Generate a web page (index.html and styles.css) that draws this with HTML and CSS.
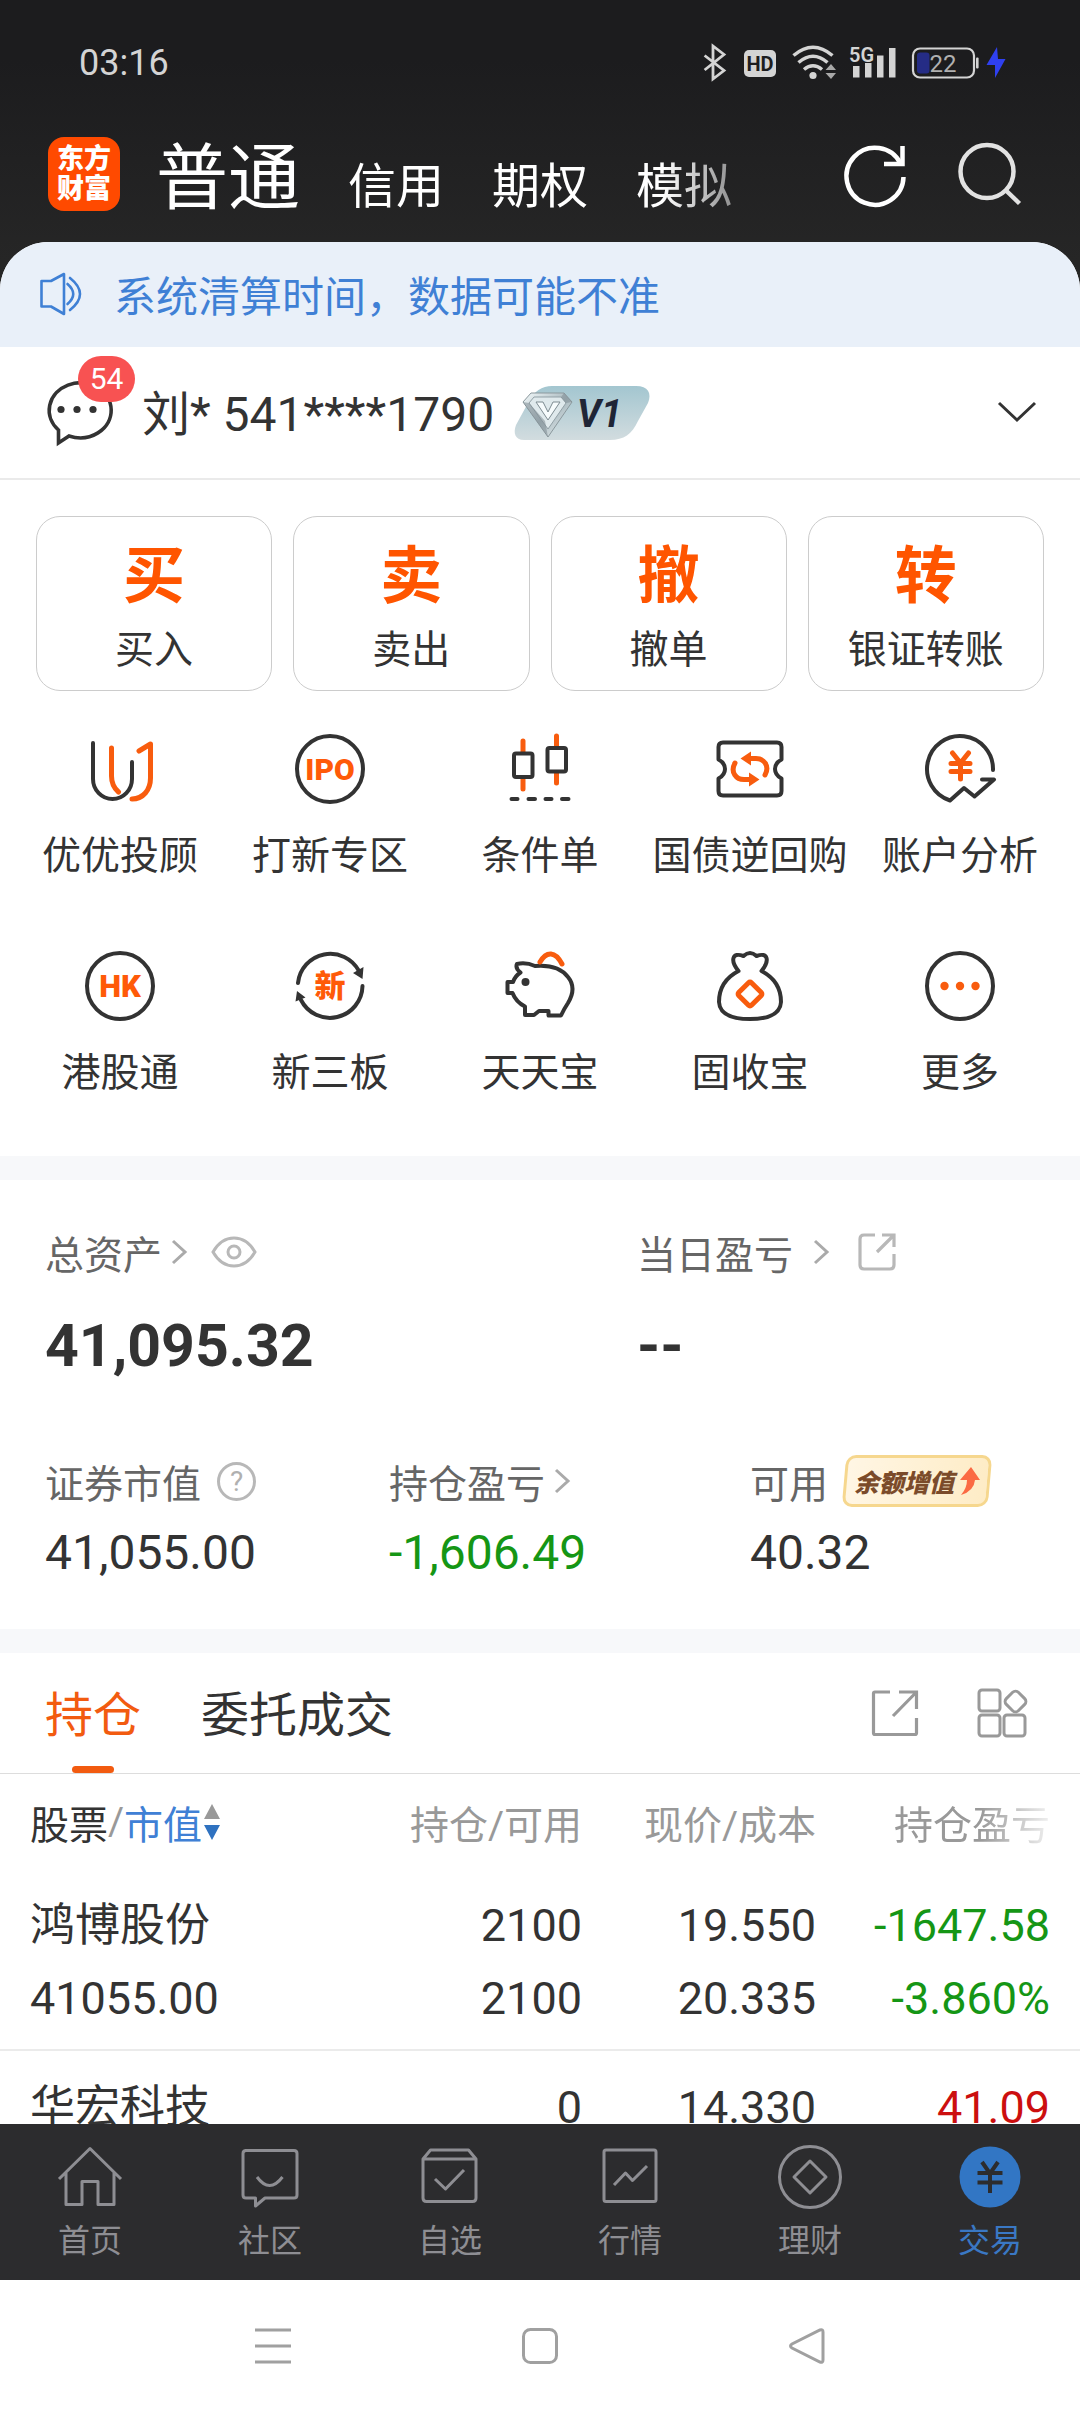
FILE: index.html
```html
<!DOCTYPE html>
<html lang="zh-CN">
<head>
<meta charset="utf-8">
<meta name="viewport" content="width=device-width, initial-scale=1">
<title>交易</title>
<link rel="stylesheet" href="styles.css">
</head>
<body>
<header class="top">
  <div class="status">
    <time>03:16</time>
    <svg class="status-icons" viewBox="0 0 308 40" width="308" height="40" role="img" aria-label="5G 22%">
      <path d="M4.600 12.500L24 27.500L13 36V3L24 11.500L4.600 27" fill="none" stroke="#d4d4d4" stroke-width="2.800"/>
      <rect x="44" y="7" width="32" height="27" rx="5" fill="#d4d4d4"/>
      <text x="60" y="28" text-anchor="middle" font-size="20" font-weight="700" fill="#1d1d1f">HD</text>
      <g fill="none" stroke="#d4d4d4" stroke-width="3.500">
        <path d="M93.500 12.500Q113 -4 132.500 12.500"/>
        <path d="M98.500 19.500Q113 7 127.500 19.500"/>
        <path d="M104 26.500Q113 19 122 26.500"/>
      </g>
      <circle cx="113" cy="32.500" r="3.600" fill="#d4d4d4"/>
      <path d="M125.500 27L131 21L136 27ZM125.500 30L131 36L136 30Z" fill="#a8a8a8"/>
      <text x="149" y="19" font-size="20" font-weight="600" fill="#d4d4d4">5G</text>
      <path d="M153 23h6.500v11.500h-6.500zM165 20h6.500v14.500h-6.500zM177 12.500h6.500v22h-6.500zM189 5h6.500v29.500h-6.500z" fill="#d4d4d4"/>
      <rect x="213" y="5.500" width="61" height="29" rx="7" fill="none" stroke="#d4d4d4" stroke-width="2.200"/>
      <rect x="217" y="9.500" width="12.500" height="21" rx="3" fill="#252c85"/>
      <rect x="276" y="14.500" width="2.600" height="11" rx="1" fill="#d4d4d4"/>
      <text x="229.500" y="28.500" font-size="24" fill="#b0b0b0">22</text>
      <path d="M297 4L286.500 22H295V35L305.500 16H298Z" fill="#2f40f0"/>
    </svg>
  </div>
  <div class="bar">
    <div class="logo">东方<br>财富</div>
    <nav class="modes">
      <a class="mode mode-on" href="#">普通</a>
      <a class="mode" href="#">信用</a>
      <a class="mode" href="#">期权</a>
      <a class="mode" href="#">模拟</a>
    </nav>
    <div class="tools">
      <button type="button" aria-label="刷新"><svg viewBox="0 0 64 64" width="64" height="64" fill="none" stroke="#fff" stroke-width="4.500"><path d="M60.500 35A28.500 28.500 0 1 1 57.500 21.500"/><path d="M59.500 4V22H41"/></svg></button>
      <button type="button" aria-label="搜索"><svg viewBox="0 0 64 64" width="64" height="64" fill="none" stroke="#e2e2e2" stroke-width="4.500"><circle cx="30" cy="29.500" r="26.500"/><path d="M48.500 48L62.500 61.500"/></svg></button>
    </div>
  </div>
</header>

<main class="sheet">
  <div class="notice">
    <svg viewBox="0 0 44 44" width="44" height="44" fill="none" stroke="#3f80d5" stroke-width="2.600" stroke-linecap="round" stroke-linejoin="round"><path d="M2.500 9H12L25 2V42L12 34.500H2.500Z"/><path d="M28.500 12Q40 22 28.500 32"/><path d="M31 6Q51 22 31 38"/></svg>
    <span>系统清算时间，数据可能不准</span>
  </div>

  <section class="user">
    <a class="chat" href="#" aria-label="消息">
      <svg viewBox="0 0 68 68" width="68" height="68"><path d="M15.500 51A31 27.500 0 1 1 26 57L15.500 64Z" fill="none" stroke="#333" stroke-width="3.600"/><g fill="#333"><circle cx="18" cy="30.500" r="3.600"/><circle cx="34" cy="30.500" r="3.600"/><circle cx="50" cy="30.500" r="3.600"/></g></svg>
      <span class="count">54</span>
    </a>
    <span class="account">刘* 541****1790</span>
    <svg class="level" viewBox="0 0 137 56" width="137" height="56" role="img" aria-label="V1">
      <defs>
        <linearGradient id="plate" x1="0" y1="0" x2="0" y2="1"><stop offset="0" stop-color="#a3c6d0"/><stop offset="1" stop-color="#d2dcdf"/></linearGradient>
        <linearGradient id="gem" x1="0" y1="0" x2="1" y2="1"><stop offset="0" stop-color="#f4fafb"/><stop offset=".5" stop-color="#a9b9bf"/><stop offset="1" stop-color="#eef4f5"/></linearGradient>
      </defs>
      <path d="M38 1H122C134 1 138 8 134 18L124 36C118 49 110 55 96 55H10C1 55 -1 48 2 40L14 18C20 6 28 1 38 1Z" fill="url(#plate)"/>
      <path d="M17 8H50L58 17L34 52L9 17Z" fill="url(#gem)" stroke="#8b989d"/>
      <path d="M20 12H47L52 18L34 44L15 18Z" fill="#dfe9ec" stroke="#93a1a7"/>
      <path d="M22 17L34 35L46 17H39L34 27L29 17Z" fill="#f6fbfc" stroke="#7d8b91"/>
      <path d="M9 17L34 52L31 36L15 18ZM50 8L58 17L52 18L47 12Z" fill="#7f8d93" opacity=".55"/>
      <text x="63" y="42" font-size="38" font-weight="700" font-style="italic" fill="#1f2536">V1</text>
    </svg>
    <button class="expand" type="button" aria-label="展开"><svg viewBox="0 0 40 24" width="40" height="24" fill="none" stroke="#333" stroke-width="3"><path d="M2 2L20 19L38 2"/></svg></button>
  </section>

  <section class="cards">
    <button class="card" type="button"><b>买</b><span>买入</span></button>
    <button class="card" type="button"><b>卖</b><span>卖出</span></button>
    <button class="card" type="button"><b>撤</b><span>撤单</span></button>
    <button class="card" type="button"><b>转</b><span>银证转账</span></button>
  </section>

  <nav class="grid">
    <a href="#"><svg class="ico" viewBox="0 0 80 80"><path class="d" d="M13 14V50A19.500 20 0 0 0 52 50V33"/><path class="o" d="M31.500 19V47Q31.500 57 38.500 63M52 70C63 70 70.500 61 70.500 49V15L59 22"/></svg><span>优优投顾</span></a>
    <a href="#"><svg class="ico" viewBox="0 0 80 80"><circle class="d" cx="40" cy="40" r="33"/><text class="t" x="40" y="51" font-size="30">IPO</text></svg><span>打新专区</span></a>
    <a href="#"><svg class="ico" viewBox="0 0 80 80"><path class="o" d="M23 12V23M23 49V60M56.500 7V17M56.500 44V54"/><rect class="d" x="14" y="24.500" width="18.500" height="23.500" rx="2"/><rect class="d" x="47.500" y="19" width="18.500" height="23.500" rx="2"/><path class="d" d="M11.500 70H17.500M28.500 70H35M45.500 70H51.500M62 70H68.500"/></svg><span>条件单</span></a>
    <a href="#"><svg class="ico" viewBox="0 0 80 80"><path class="d" d="M13 13.500H67Q71.500 13.500 71.500 18V30.500Q65 34 65 40T71.500 49.500V62Q71.500 66.500 67 66.500H13Q8.500 66.500 8.500 62V49.500Q15 46 15 40T8.500 30.500V18Q8.500 13.500 13 13.500Z"/><path class="o" d="M55 46C60 37 54 29 45 29.500H38M25 34C20 43 26 51 35 50.500H42"/><path class="f" d="M30.500 29.500L41 22.500V36.500ZM49.500 50.500L39 43.500V57.500Z"/></svg><span>国债逆回购</span></a>
    <a href="#"><svg class="ico" viewBox="0 0 80 80"><path class="d" d="M73 41A33 33 0 1 0 30 71.500L44 59L54.500 67.500L74 50.500H62"/><path class="o" d="M32.500 24L40.500 34L48.500 24M40.500 34V50M31 34.500H50M31 42.500H50"/></svg><span>账户分析</span></a>
    <a href="#"><svg class="ico" viewBox="0 0 80 80"><circle class="d" cx="40" cy="40" r="33"/><text class="t" x="40" y="51" font-size="31">HK</text></svg><span>港股通</span></a>
    <a href="#"><svg class="ico" viewBox="0 0 80 80"><path class="d" d="M8 37A32.500 32.500 0 0 1 69 25M72.500 40A32.500 32.500 0 0 1 11 54"/><path class="k" d="M72.500 33L63 27L73.500 21ZM7 45L5.500 55.500L15.500 51.500Z"/><text class="t" x="40" y="51" font-size="31">新</text></svg><span>新三板</span></a>
    <a href="#"><svg class="ico" viewBox="0 0 80 80"><path class="d" d="M17 18Q15 22 20.500 26.500Q15 30 13 36H7.500V47H12.500Q16 56 25 60.500V69H34L39 65H48.500V69.500H61Q64 63 68 57Q77 42 68 31Q58 18 35 20Q26 16 17 18Z"/><circle class="k" cx="25.500" cy="36" r="4"/><path class="o" d="M40 16Q45 7.500 51 8T62 18"/></svg><span>天天宝</span></a>
    <a href="#"><svg class="ico" viewBox="0 0 80 80"><path class="d" d="M28.500 25Q22 17 23.500 12T33.500 10Q40 4 46.500 10Q55 7 56.500 12T51.500 25C63 31 71 41 71 56Q70 73 40 73T9 56C9 41 17 31 28.500 25Z"/><rect class="o" x="31" y="39" width="18" height="18" rx="2" transform="rotate(45 40 48)"/></svg><span>固收宝</span></a>
    <a href="#"><svg class="ico" viewBox="0 0 80 80"><circle class="d" cx="40" cy="40" r="33"/><g class="f"><circle cx="24.500" cy="40" r="4.200"/><circle cx="40" cy="40" r="4.200"/><circle cx="55.500" cy="40" r="4.200"/></g></svg><span>更多</span></a>
  </nav>

  <section class="assets">
    <div class="totals">
      <div>
        <div class="label"><a href="#">总资产<svg class="arrow" viewBox="0 0 16 26" width="16" height="26"><path d="M2 2L14 13L2 24"/></svg></a>
          <button type="button" aria-label="隐藏金额"><svg viewBox="0 0 46 32" width="46" height="32" fill="none" stroke="#b8b8b8" stroke-width="3"><path d="M2 16Q10 2 23 2T44 16Q36 30 23 30T2 16Z"/><circle cx="23" cy="16" r="6"/></svg></button></div>
        <div class="total">41,095.32</div>
      </div>
      <div>
        <div class="label"><a class="wide" href="#">当日盈亏<svg class="arrow" viewBox="0 0 16 26" width="16" height="26"><path d="M2 2L14 13L2 24"/></svg></a>
          <button class="share" type="button" aria-label="分享"><svg viewBox="0 0 40 40" width="40" height="40" fill="none" stroke="#b8b8b8" stroke-width="3.200"><path d="M18 3H7Q3 3 3 7V33Q3 37 7 37H33Q37 37 37 33V22M25 3H37V15M37 3L20 20"/></svg></button></div>
        <div class="total">--</div>
      </div>
    </div>
    <div class="parts">
      <div>
        <div class="label">证券市值<button class="help" type="button" aria-label="说明">?</button></div>
        <div class="part">41,055.00</div>
      </div>
      <div>
        <div class="label"><a href="#">持仓盈亏<svg class="arrow" viewBox="0 0 16 26" width="16" height="26"><path d="M2 2L14 13L2 24"/></svg></a></div>
        <div class="part down">-1,606.49</div>
      </div>
      <div>
        <div class="label">可用<button class="promo" type="button">余额增值<svg viewBox="0 0 22 30" width="22" height="30"><path d="M13 1L22 14H17Q16 25 3 29Q9 22 9 14H2Z" fill="#fb6a43"/></svg></button></div>
        <div class="part">40.32</div>
      </div>
    </div>
  </section>

  <section class="holdings">
    <div class="tabs">
      <button class="tab tab-on" type="button">持仓</button>
      <button class="tab" type="button">委托成交</button>
      <div class="tab-tools">
        <button type="button" aria-label="分享"><svg viewBox="0 0 48 48" width="48" height="48" fill="none" stroke="#999" stroke-width="3.200"><path d="M19 3H4Q2.500 3 2.500 4.500V44Q2.500 45.500 4 45.500H44Q45.500 45.500 45.500 44V29M28 3H45.500V20M45.500 3L22 27"/></svg></button>
        <button type="button" aria-label="布局"><svg viewBox="0 0 50 50" width="50" height="50" fill="none" stroke="#999" stroke-width="3"><rect x="2" y="2" width="21" height="21" rx="3"/><rect x="2" y="27" width="21" height="21" rx="3"/><rect x="27" y="27" width="21" height="21" rx="3"/><rect x="30" y="5" width="17" height="17" rx="4" transform="rotate(45 38.500 13.500)"/></svg></button>
      </div>
    </div>
    <table class="table">
      <colgroup><col><col class="c-qty"><col class="c-price"><col class="c-gain"></colgroup>
      <thead>
        <tr>
          <th scope="col"><span class="sort"><span class="dark">股票</span>/<span class="blue">市值</span><svg viewBox="0 0 16 36" width="16" height="36"><path d="M8 0L16 15H0Z" fill="#999"/><path d="M8 36L16 21H0Z" fill="#2f72c0"/></svg></span></th>
          <th scope="col">持仓/可用</th>
          <th scope="col">现价/成本</th>
          <th scope="col"><span class="fade">持仓盈亏</span></th>
        </tr>
      </thead>
      <tbody>
        <tr><td>鸿博股份<br>41055.00</td><td>2100<br>2100</td><td>19.550<br>20.335</td><td class="down">-1647.58<br>-3.860%</td></tr>
        <tr><td>华宏科技</td><td>0</td><td>14.330</td><td class="up">41.09</td></tr>
      </tbody>
    </table>
  </section>
</main>

<nav class="tabbar">
  <a href="#"><svg viewBox="0 0 64 64"><path d="M1 34L32 3.500L63 34M8 28V59.500H24V36.500H40V59.500H56V28"/></svg>首页</a>
  <a href="#"><svg viewBox="0 0 64 64"><path d="M7 5.500H56Q59 5.500 59 8.500V50Q59 53 56 53H27L17.500 61V53H8Q5 53 5 50V8.500Q5 5.500 8 5.500M19 32Q31.500 49 44.500 32"/></svg>社区</a>
  <a href="#"><svg viewBox="0 0 64 64"><path d="M5 14L12.500 5H50.500L58 14V53Q58 56.500 54.500 56.500H8.500Q5 56.500 5 53ZM5 14H58M17 34L27.500 44L46 25"/></svg>自选</a>
  <a href="#"><svg viewBox="0 0 64 64"><rect x="6" y="5" width="52" height="51.500" rx="2"/><path d="M16 40L27.500 28L34.500 35.500L49 21"/></svg>行情</a>
  <a href="#"><svg viewBox="0 0 64 64"><circle cx="32" cy="32" r="30.500"/><path d="M32 16L48 32L32 48L16 32Z"/></svg>理财</a>
  <a class="on" href="#"><svg viewBox="0 0 64 64"><circle class="coin" cx="32" cy="32" r="30.500"/><path class="yen" d="M24 17L32 28.500L40 17M32 28V48M19.500 28H44.500M19.500 37.500H44.500"/></svg>交易</a>
</nav>

<nav class="sysnav">
  <button type="button" aria-label="最近任务"><svg viewBox="0 0 36 36"><path d="M0 2H36M0 18H36M0 34H36"/></svg></button>
  <button type="button" aria-label="主屏幕"><svg viewBox="0 0 36 36"><rect x="1.500" y="1.500" width="33" height="33" rx="7"/></svg></button>
  <button type="button" aria-label="返回"><svg viewBox="0 0 36 36"><path d="M31 2Q34 1 34 4V32Q34 35 31 34L3 20Q0 18 3 16Z"/></svg></button>
</nav>
</body>
</html>
```
FILE: styles.css
```css
* { box-sizing: border-box; }

body {
  margin: 0;
  height: 100vh;
  display: flex;
  flex-direction: column;
  overflow: hidden;
  font-family: Roboto, "Noto Sans CJK SC", sans-serif;
  color: #333;
  background: linear-gradient(#1c1c1e 60px, #262626 260px);
}

a { color: inherit; text-decoration: none; }

button {
  margin: 0;
  padding: 0;
  border: 0;
  background: none;
  font: inherit;
  color: inherit;
}

svg { display: block; flex: none; overflow: visible; }

/* Status bar and account switcher */
.status {
  display: flex;
  align-items: center;
  justify-content: space-between;
  height: 106px;
  padding: 20px 72px 0 79px;
  font-size: 36px;
  color: #d4d4d4;
}

.bar {
  display: flex;
  align-items: center;
  height: 136px;
  padding: 0 59px 0 48px;
}

.logo {
  display: grid;
  place-content: center;
  width: 72px;
  height: 74px;
  border-radius: 16px;
  background: #ff4a00;
  color: #fff;
  font-size: 27px;
  font-weight: 900;
  line-height: 30px;
}

.modes {
  display: flex;
  align-items: baseline;
  gap: 48px;
  margin-left: 36px;
  padding-top: 18px;
  color: #fff;
  font-size: 48px;
  line-height: 72px;
  -webkit-mask: linear-gradient(90deg, #000 88%, rgba(0, 0, 0, .5));
  mask: linear-gradient(90deg, #000 88%, rgba(0, 0, 0, .5));
}

.mode-on { font-size: 72px; }

.tools {
  display: flex;
  gap: 50px;
  margin-left: auto;
}

/* Sheet */
.sheet {
  flex: 1;
  min-height: 0;
  overflow: hidden;
  border-radius: 48px 48px 0 0;
  background: #fff;
}

.notice {
  display: flex;
  align-items: center;
  gap: 31px;
  height: 105px;
  padding: 0 39px 2px;
  background: #e9f0f9;
  color: #3f80d5;
  font-size: 42px;
}

.user {
  display: flex;
  align-items: center;
  height: 133px;
  padding: 0 43px;
  border-bottom: 2px solid #eaeaea;
}

.chat { position: relative; }

.count {
  position: absolute;
  left: 35px;
  top: -23px;
  width: 57px;
  border-radius: 23px;
  background: #f85252;
  color: #fff;
  font-size: 30px;
  line-height: 46px;
  text-align: center;
}

.account {
  margin: 0 20px 0 31px;
  padding-bottom: 5px;
  font-size: 48px;
}

.expand { margin-left: auto; }

.cards {
  display: grid;
  grid-template-columns: repeat(4, 1fr);
  gap: 21px;
  padding: 36px;
}

.card {
  display: flex;
  flex-direction: column;
  align-items: center;
  gap: 13px;
  padding: 24px 0 16px;
  border: 1px solid #ccc;
  border-radius: 24px;
  font-size: 39px;
  line-height: 48px;
}

.card b {
  color: #ff5500;
  font-size: 62px;
  line-height: 72px;
}

.grid {
  display: grid;
  grid-template-columns: repeat(5, 1fr);
  row-gap: 66px;
  padding: 2px 15px 59px;
}

.grid a {
  display: flex;
  flex-direction: column;
  align-items: center;
  gap: 23px;
  font-size: 39px;
  line-height: 48px;
  white-space: nowrap;
}

.ico { width: 80px; height: 80px; }
.d { fill: none; stroke: #333; stroke-width: 4; stroke-linecap: round; stroke-linejoin: round; }
.o { fill: none; stroke: #f85c0e; stroke-width: 5; stroke-linecap: round; stroke-linejoin: round; }
.f { fill: #f85c0e; }
.k { fill: #333; }
.t { fill: #ff5a08; font-weight: 900; text-anchor: middle; }

/* Assets */
.assets {
  padding: 48px 0 46px 45px;
  border: solid #f7f8fa;
  border-width: 24px 0;
}

.totals, .parts { display: grid; }
.totals { grid-template-columns: 592fr 443fr; }
.parts { grid-template-columns: 344fr 361fr 330fr; margin-top: 73px; }

.label {
  display: flex;
  align-items: center;
  height: 48px;
  color: #666;
  font-size: 39px;
  white-space: nowrap;
}

.parts .label { height: 52px; }

.label a {
  display: flex;
  align-items: center;
  gap: 9px;
  margin-right: 24px;
}

.label .wide { gap: 20px; margin-right: 28px; }

.arrow { fill: none; stroke: #aaa; stroke-width: 3; }

.total {
  margin-top: 34px;
  font-size: 59px;
  font-weight: 700;
  line-height: 72px;
}

.part {
  margin-top: 16px;
  font-size: 48px;
  line-height: 60px;
}

.help {
  width: 39px;
  height: 39px;
  margin-left: 16px;
  border: 3px solid #b8b8b8;
  border-radius: 50%;
  color: #b0b0b0;
  font-size: 28px;
  line-height: 33px;
}

.promo {
  position: relative;
  z-index: 0;
  display: flex;
  align-items: center;
  gap: 4px;
  height: 52px;
  margin-left: 14px;
  padding: 0 12px;
  color: #7b4b2a;
  font-size: 25px;
  font-weight: 900;
  font-style: italic;
}

.promo::before {
  content: "";
  position: absolute;
  inset: 0 2px;
  z-index: -1;
  border: 3px solid #f6d78e;
  border-radius: 10px;
  background: linear-gradient(90deg, #fff6e4, #feecc6);
  transform: skewX(-5deg);
}

.down { color: #159615; }
.up { color: #cc0f0f; }

/* Holdings */
.tabs {
  display: flex;
  align-items: stretch;
  gap: 60px;
  height: 121px;
  padding: 0 53px 0 45px;
  border-bottom: 1px solid #ddd;
}

.tab {
  position: relative;
  padding-bottom: 4px;
  font-size: 48px;
}

.tab-on { color: #f25b10; }

.tab-on::after {
  content: "";
  position: absolute;
  left: 50%;
  bottom: 0;
  width: 42px;
  height: 7px;
  margin-left: -21px;
  border-radius: 4px;
  background: #f25b10;
}

.tab-tools {
  display: flex;
  align-items: center;
  gap: 58px;
  margin-left: auto;
}

.table {
  width: 100%;
  table-layout: fixed;
  border-collapse: collapse;
  text-align: right;
  font-size: 45px;
}

.c-qty { width: 205px; }
.c-price { width: 234px; }
.c-gain { width: 264px; }

.table th {
  height: 95px;
  padding: 0;
  color: #999;
  font-size: 39px;
  font-weight: 400;
}

.table td {
  padding: 20px 0 14px;
  line-height: 73px;
  vertical-align: top;
}

.table tr > :first-child { padding-left: 30px; text-align: left; }
.table tr > :last-child { padding-right: 30px; }
.table tbody tr { border-bottom: 2px solid #ebebeb; }

.sort { display: flex; align-items: center; }
.sort svg { margin-left: 2px; }
.dark { color: #333; }
.blue { color: #3f80d5; }

.fade {
  -webkit-mask: linear-gradient(90deg, #000 55%, rgba(0, 0, 0, .15));
  mask: linear-gradient(90deg, #000 55%, rgba(0, 0, 0, .15));
}

/* App tab bar */
.tabbar {
  display: grid;
  grid-template-columns: repeat(6, 1fr);
  padding: 21px 0 19px;
  background: #2c2c2e;
}

.tabbar a {
  display: flex;
  flex-direction: column;
  align-items: center;
  gap: 12px;
  color: #8e8e93;
  font-size: 32px;
  line-height: 40px;
}

.tabbar svg {
  width: 64px;
  height: 64px;
  fill: none;
  stroke: #8e8e93;
  stroke-width: 3;
  stroke-linejoin: round;
}

.tabbar .on { color: #3a78c4; }
.tabbar .coin { fill: #3276c4; stroke: none; }
.tabbar .yen { stroke: #2c2c2e; stroke-width: 4; }

/* System navigation */
.sysnav {
  display: flex;
  align-items: center;
  justify-content: center;
  gap: 231px;
  height: 132px;
  background: #fff;
}

.sysnav svg {
  width: 36px;
  height: 36px;
  fill: none;
  stroke: #a0a0a0;
  stroke-width: 3;
}
```
